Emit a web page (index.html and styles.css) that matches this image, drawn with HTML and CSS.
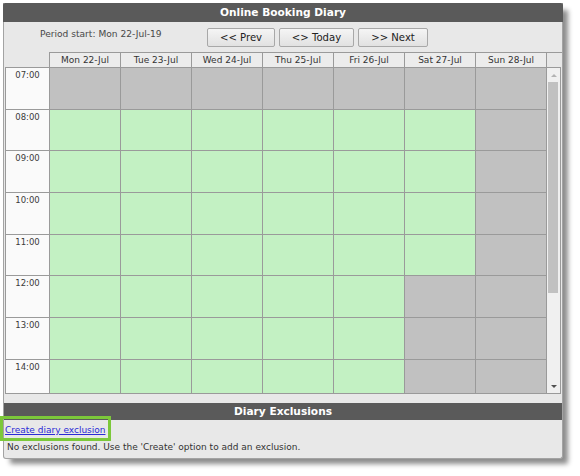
FILE: index.html
```html
<!DOCTYPE html>
<html>
<head>
<meta charset="utf-8">
<link rel="stylesheet" href="styles.css">
</head>
<body>
<div class="page">
  <div class="panel">
    <div class="title">Online Booking Diary</div>
    <div class="toolbar">
      <div class="period">Period start: Mon 22-Jul-19</div>
      <div class="nav">
        <button class="btn btn-prev">&lt;&lt; Prev</button>
        <button class="btn btn-today">&lt;&gt; Today</button>
        <button class="btn btn-next">&gt;&gt; Next</button>
      </div>
    </div>
    <div class="dayhead">
      <div class="dh">Mon 22-Jul</div>
      <div class="dh">Tue 23-Jul</div>
      <div class="dh">Wed 24-Jul</div>
      <div class="dh">Thu 25-Jul</div>
      <div class="dh">Fri 26-Jul</div>
      <div class="dh">Sat 27-Jul</div>
      <div class="dh">Sun 28-Jul</div>
    </div>
    <div class="gridwrap">
      <div class="grid">
        <div class="time">07:00</div>
        <div class="c off"></div><div class="c off"></div><div class="c off"></div><div class="c off"></div><div class="c off"></div><div class="c off"></div><div class="c off"></div>
        <div class="time">08:00</div>
        <div class="c on"></div><div class="c on"></div><div class="c on"></div><div class="c on"></div><div class="c on"></div><div class="c on"></div><div class="c off"></div>
        <div class="time">09:00</div>
        <div class="c on"></div><div class="c on"></div><div class="c on"></div><div class="c on"></div><div class="c on"></div><div class="c on"></div><div class="c off"></div>
        <div class="time">10:00</div>
        <div class="c on"></div><div class="c on"></div><div class="c on"></div><div class="c on"></div><div class="c on"></div><div class="c on"></div><div class="c off"></div>
        <div class="time">11:00</div>
        <div class="c on"></div><div class="c on"></div><div class="c on"></div><div class="c on"></div><div class="c on"></div><div class="c on"></div><div class="c off"></div>
        <div class="time">12:00</div>
        <div class="c on"></div><div class="c on"></div><div class="c on"></div><div class="c on"></div><div class="c on"></div><div class="c off"></div><div class="c off"></div>
        <div class="time">13:00</div>
        <div class="c on"></div><div class="c on"></div><div class="c on"></div><div class="c on"></div><div class="c on"></div><div class="c off"></div><div class="c off"></div>
        <div class="time">14:00</div>
        <div class="c on"></div><div class="c on"></div><div class="c on"></div><div class="c on"></div><div class="c on"></div><div class="c off"></div><div class="c off"></div>
      </div>
      <div class="scrollbar">
        <div class="sb-btn"><span class="tri-up"></span></div>
        <div class="track"><div class="thumb"></div></div>
        <div class="sb-btn"><span class="tri-down"></span></div>
      </div>
    </div>
    <div class="subtitle">Diary Exclusions</div>
    <div class="excl">
      <a class="link" href="#">Create diary exclusion</a>
      <div class="empty">No exclusions found. Use the 'Create' option to add an exclusion.</div>
    </div>
  </div>
  <div class="highlight"></div>
</div>
</body>
</html>
```

FILE: styles.css
```css
html, body {
  margin: 0;
  padding: 0;
  background: #ffffff;
}

body {
  font-family: "DejaVu Sans", Verdana, sans-serif;
  color: #333333;
}

.page {
  position: relative;
  padding: 3px;
  width: 580px;
  height: 476px;
  box-sizing: border-box;
}

.panel {
  width: 560px;
  box-sizing: border-box;
  background: #e8e8e8;
  border: 1px solid #a3a3a3;
  border-top: 0;
  border-radius: 0 0 3px 3px;
  box-shadow: 6px 6px 5px -1px rgba(0, 0, 0, 0.45);
}

.title {
  height: 19px;
  margin: 0 -1px;
  background: #5a5a5a;
  color: #ffffff;
  font-weight: bold;
  font-size: 10.6px;
  line-height: 19px;
  text-align: center;
  border-radius: 2px 2px 0 0;
}

.toolbar {
  display: flex;
  height: 30px;
}

.period {
  width: 167px;
  margin-left: 36px;
  padding-top: 7px;
  font-size: 9.1px;
  line-height: 11px;
  color: #474747;
}

.nav {
  display: flex;
  gap: 4px;
  padding-top: 6px;
}

.btn {
  height: 19px;
  padding: 0;
  margin: 0;
  font-family: "DejaVu Sans", Verdana, sans-serif;
  font-size: 10.1px;
  color: #222222;
  background: linear-gradient(#f5f5f5, #e1e1e1);
  border: 1px solid #a8a8a8;
  border-radius: 2px;
  text-align: center;
}

.btn-prev { width: 68px; }
.btn-today { width: 75px; }
.btn-next { width: 70px; }

.dayhead {
  display: flex;
  margin-left: 45px;
  height: 15px;
  box-sizing: border-box;
  border-top: 1px solid #9a9a9a;
  border-left: 1px solid #9a9a9a;
}

.dh {
  width: 71px;
  box-sizing: border-box;
  border-right: 1px solid #9a9a9a;
  background: #ececec;
  font-size: 9px;
  line-height: 14px;
  text-align: center;
  color: #333333;
}

.gridwrap {
  display: flex;
  margin-left: 1px;
  width: 556px;
  height: 327px;
  box-sizing: border-box;
  border: 1px solid #9a9a9a;
  overflow: hidden;
}

.grid {
  display: grid;
  grid-template-columns: 44px repeat(7, 71px);
  grid-auto-rows: 41.667px;
  width: 541px;
  flex: none;
  overflow: hidden;
}

.time {
  box-sizing: border-box;
  border-right: 1px solid #9a9a9a;
  border-bottom: 1px solid #9a9a9a;
  background: #fafafa;
  font-size: 8.5px;
  line-height: 10px;
  padding-top: 2px;
  text-align: center;
  color: #3a3a3a;
}

.c {
  box-sizing: border-box;
  border-right: 1px solid #9a9a9a;
  border-bottom: 1px solid #9a9a9a;
}

.on { background: #c3f1c3; }
.off { background: #c1c1c1; }

.scrollbar {
  width: 13px;
  flex: none;
  display: flex;
  flex-direction: column;
  background: #f0f0f0;
}

.sb-btn {
  height: 14px;
  flex: none;
  display: flex;
  align-items: center;
  justify-content: center;
}

.tri-up {
  width: 0;
  height: 0;
  border-left: 3px solid transparent;
  border-right: 3px solid transparent;
  border-bottom: 3px solid #b3b3b3;
}

.tri-down {
  width: 0;
  height: 0;
  border-left: 3px solid transparent;
  border-right: 3px solid transparent;
  border-top: 3px solid #505050;
}

.track {
  flex: 1;
  padding: 0 2px 0 1px;
}

.thumb {
  height: 211px;
  background: #c1c1c1;
}

.subtitle {
  margin-top: 9px;
  height: 17px;
  background: #5a5a5a;
  color: #ffffff;
  font-weight: bold;
  font-size: 10.6px;
  line-height: 17px;
  text-align: center;
}

.excl {
  padding: 4px 0 5px 1px;
  font-size: 9px;
  line-height: 12px;
}

.link {
  display: inline-block;
  color: #2b2bd6;
  text-decoration: underline;
}

.empty {
  margin-top: 5px;
  padding-left: 2px;
  color: #333333;
}

.highlight {
  position: absolute;
  left: 0;
  top: 416px;
  width: 111px;
  height: 25px;
  box-sizing: border-box;
  border: 3px solid #7cc83a;
}
```
